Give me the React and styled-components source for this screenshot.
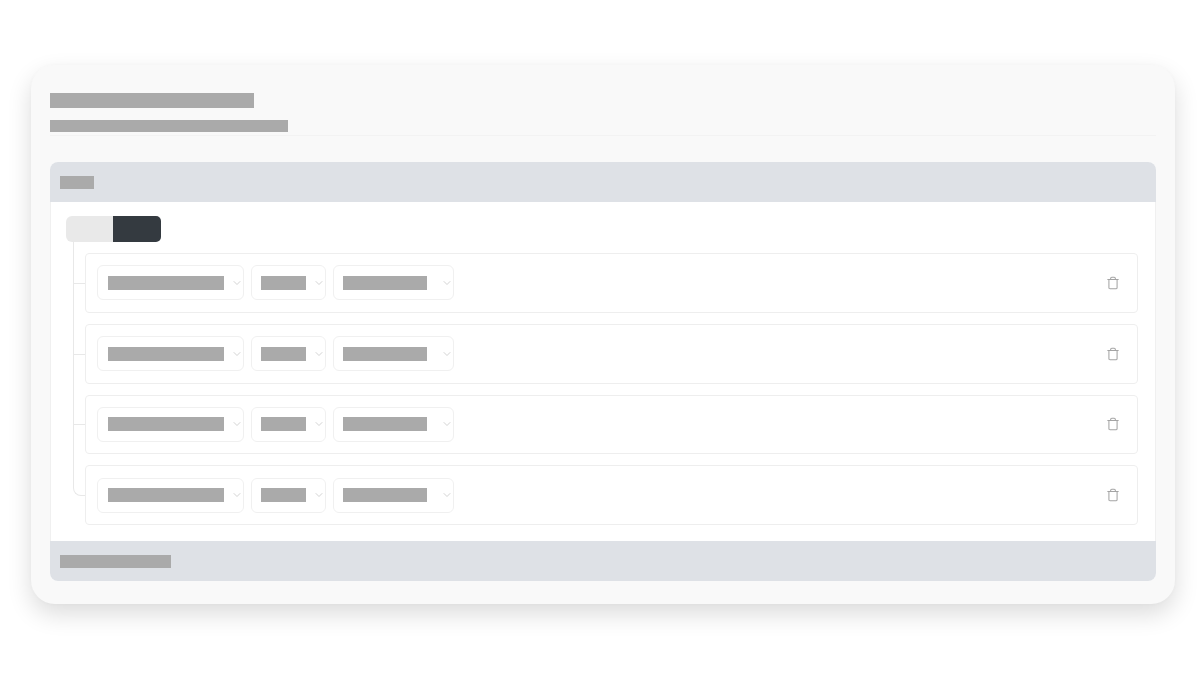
import React from 'react';
import styled, { createGlobalStyle } from 'styled-components';
import { ChevronDown, Trash } from 'lucide-react';

const Global = createGlobalStyle`
  html, body { margin: 0; padding: 0; background: #fff; }
  body { width: 1200px; height: 675px; overflow: hidden; font-family: "Liberation Sans", sans-serif; }
`;

const Page = styled.div`
  padding: 65px 25px 0 31px;
  filter: blur(0.4px);
`;

const Card = styled.div`
  width: 1144px;
  height: 539px;
  box-sizing: border-box;
  padding: 28px 19px 0 19px;
  background: #f9f9f9;
  border-radius: 24px;
  box-shadow: 0 10px 24px rgba(0, 0, 0, 0.14), 0 0 6px rgba(0, 0, 0, 0.03);
`;

const Bar = styled.div`
  width: ${p => p.$w}px;
  height: ${p => p.$h || 14}px;
  background: #aaaaaa;
  flex: none;
`;

const Header = styled.div`
  display: flex;
  flex-direction: column;
  gap: 12px;
  padding-bottom: 3px;
  border-bottom: 1px solid #f3f3f3;
  margin-bottom: 26px;
`;

const Section = styled.div`
  border-radius: 8px;
  overflow: hidden;
  background: #fff;
`;

const SectionBar = styled.div`
  height: 40px;
  background: #dee1e6;
  display: flex;
  align-items: center;
  padding-left: 10px;
`;

const Body = styled.div`
  padding: 14px 17px 16px 16px;
  border-left: 1px solid #f0f0f0;
  border-right: 1px solid #f0f0f0;
  box-sizing: border-box;
`;

const Toggle = styled.div`
  display: flex;
  width: 95px;
  height: 25.5px;
  border-radius: 6px 5px 5px 6px;
  overflow: hidden;
  margin-left: -1px;
`;

const ToggleHalf = styled.div`
  width: ${p => (p.$on ? 48 : 47)}px;
  background: ${p => (p.$on ? '#343a40' : '#e9e9e9')};
`;

const Tree = styled.div`
  display: flex;
  flex-direction: column;
  gap: 11px;
  margin: 11.5px 0 0 18px;
`;

const Row = styled.div`
  position: relative;
  height: 59.8px;
  box-sizing: border-box;
  border: 1px solid #eeeeee;
  border-radius: 4px;
  background: #fff;
  display: flex;
  align-items: center;
  gap: 7px;
  padding: 0 17.5px 0 11px;

  &::before {
    content: '';
    position: absolute;
    left: -13px;
    top: -13px;
    width: 12px;
    height: 42.9px;
    box-sizing: border-box;
    border-left: 1px solid #e8e8e8;
    border-bottom: 1px solid #e8e8e8;
    border-bottom-left-radius: ${p => (p.$last ? '8px' : '0')};
  }

  &::after {
    content: '';
    display: ${p => (p.$last ? 'none' : 'block')};
    position: absolute;
    left: -13px;
    top: 29px;
    bottom: -1px;
    border-left: 1px solid #e8e8e8;
  }
`;

const Select = styled.div`
  width: ${p => p.$w}px;
  height: 35px;
  box-sizing: border-box;
  border: 1px solid #f0f0f0;
  border-radius: 6px;
  display: flex;
  align-items: center;
  justify-content: space-between;
  padding: 0 0 0 ${p => p.$pad}px;
  color: #c4c4c4;
`;

const Spacer = styled.div`
  flex: 1;
`;

const Delete = styled.div`
  display: flex;
  align-items: center;
  justify-content: center;
  color: #a4a4a4;
`;

const selects = [
  { w: 147, bar: 116, pad: 10 },
  { w: 75, bar: 45, pad: 8.6 },
  { w: 121, bar: 84, pad: 8.6 },
];

export default function App() {
  return (
    <>
      <Global />
      <Page>
        <Card>
          <Header>
            <Bar $w={204} $h={15} />
            <Bar $w={238} $h={12} />
          </Header>
          <Section>
            <SectionBar><Bar $w={34} $h={13} /></SectionBar>
            <Body>
              <Toggle>
                <ToggleHalf />
                <ToggleHalf $on />
              </Toggle>
              <Tree>
                {[0, 1, 2, 3].map(i => (
                  <Row key={i} $last={i === 3}>
                    {selects.map(s => (
                      <Select key={s.w} $w={s.w} $pad={s.pad}>
                        <Bar $w={s.bar} />
                        <ChevronDown size={12} strokeWidth={1.5} />
                      </Select>
                    ))}
                    <Spacer />
                    <Delete><Trash size={14} strokeWidth={1.8} /></Delete>
                  </Row>
                ))}
              </Tree>
            </Body>
            <SectionBar><Bar $w={111} $h={13} /></SectionBar>
          </Section>
        </Card>
      </Page>
    </>
  );
}
